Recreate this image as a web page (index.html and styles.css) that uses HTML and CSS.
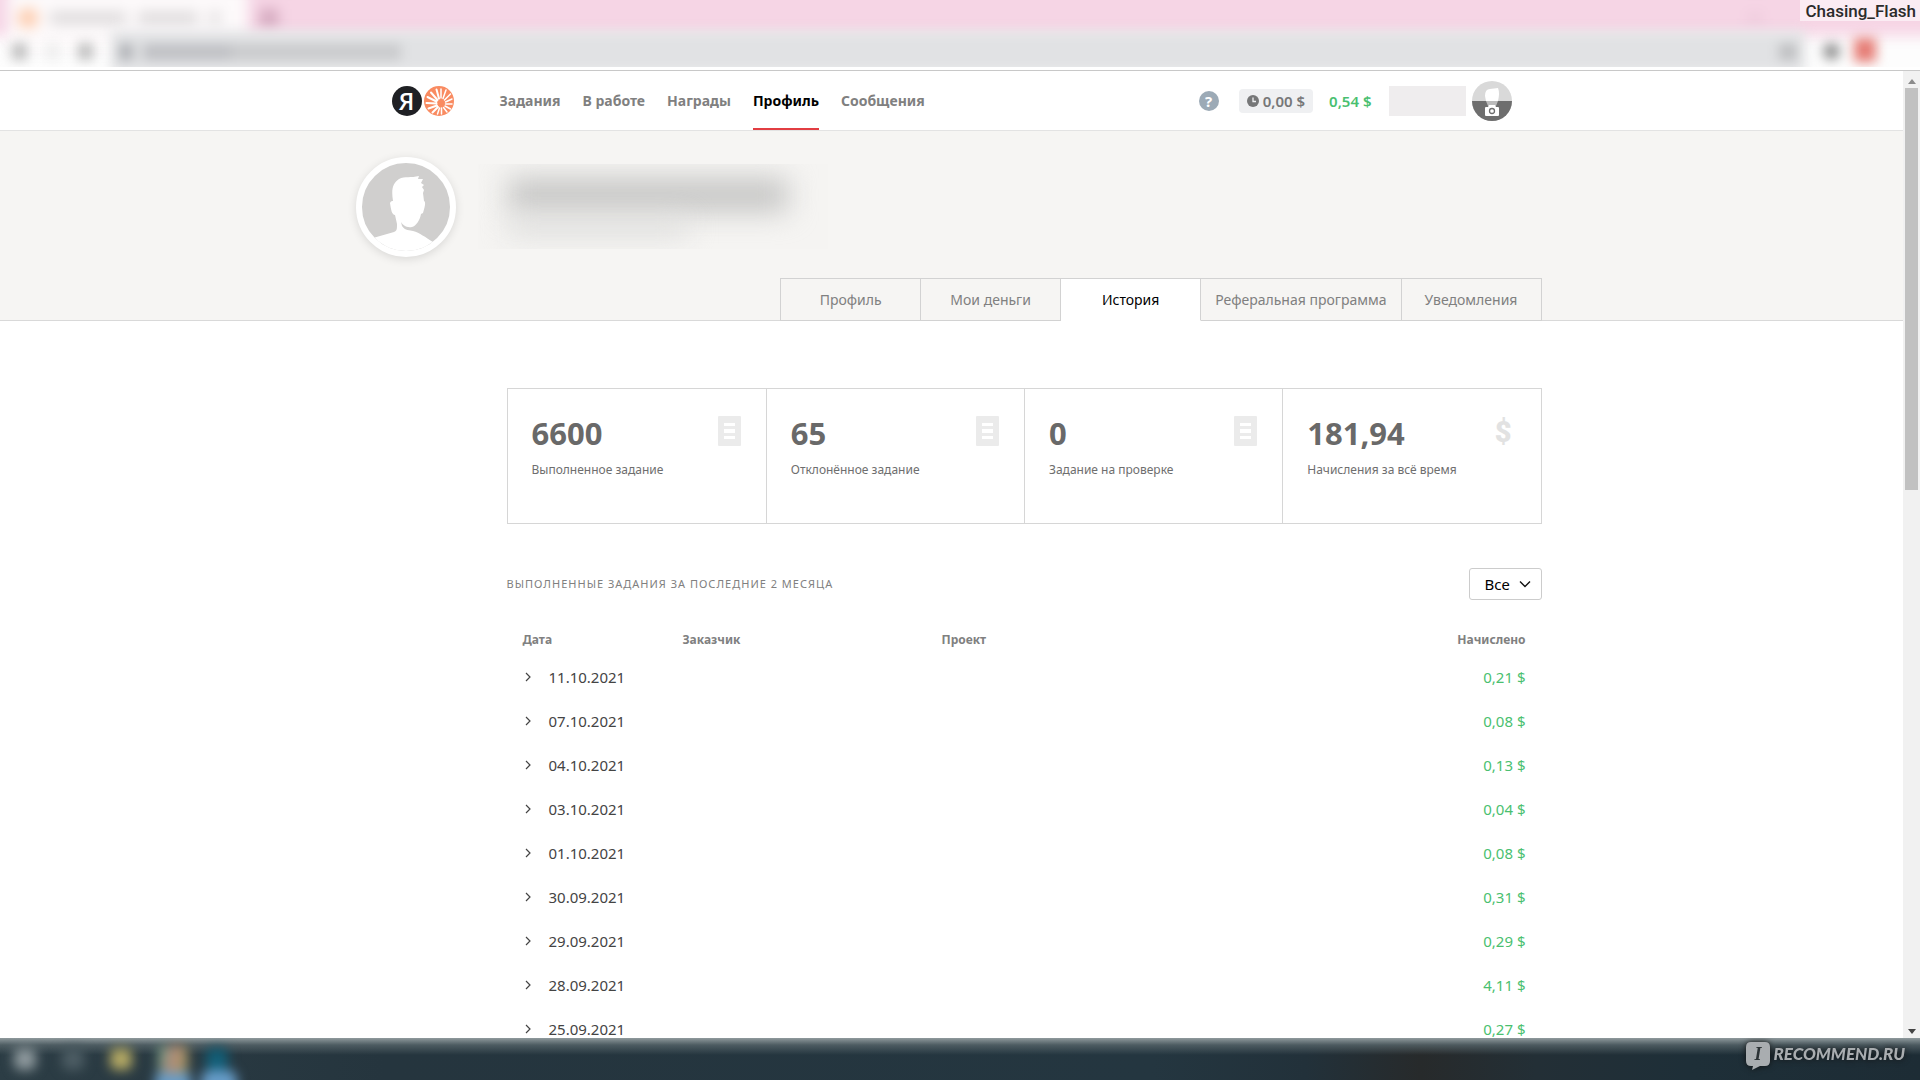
FILE: index.html
```html
<!DOCTYPE html>
<html lang="ru">
<head>
<meta charset="utf-8">
<meta name="viewport" content="width=device-width, initial-scale=1">
<title>История</title>
<link rel="stylesheet" href="styles.css">
</head>
<body>
<svg class="sprite" aria-hidden="true">
  <symbol id="person" viewBox="0 0 100 100">
    <path d="M0 100V86L17 81L38 75C41 74 41 72 41 67L39 58C36 58 35 53 34 46C35 44 36 44 37 44C35 32 37 26 43 22C49 19 55 21 63 19L62 22L67 22L65 26L68 28L66 30L68 33L67 36L68 44C70 45 69 49 67 56L65 57C64 63 60 69 56 70C50 71 47 68 45 65L46 69C49 74 54 73 57 74C64 76 69 80 77 85L100 100Z"/>
  </symbol>
  <symbol id="sheet" viewBox="0 0 23 30">
    <path fill-rule="evenodd" d="M0 1Q0 0 1 0H22Q23 0 23 1V29Q23 30 22 30H1Q0 30 0 29ZM6 7V10H17V7ZM6 13V17H17V13ZM6 20V23H17V20Z"/>
  </symbol>
  <symbol id="chevron" viewBox="0 0 10 10">
    <path d="M3 1L7 5L3 9" fill="none" stroke="currentColor" stroke-width="1.2"/>
  </symbol>
</svg>

<div class="browser">
  <div class="browser-soft">
    <div class="tabstrip">
      <div class="browser-tab"><i class="favicon"></i><i class="tab-title"></i><i class="tab-title tab-title-end"></i><i class="tab-close"></i></div>
      <i class="new-tab"></i>
      <i class="win-button"></i>
    </div>
    <div class="toolbar">
      <i class="tool"></i><i class="tool tool-faint"></i><i class="tool"></i>
      <div class="address"><i class="lock"></i><i class="url"></i><i class="url-rest"></i><i class="star"></i></div>
      <i class="tool tool-ext"></i><i class="tool tool-red"></i>
    </div>
  </div>
  <div class="author">Chasing_Flash</div>
</div>

<div class="viewport">
  <div class="page">
    <header class="header">
      <div class="header-inner">
        <a class="logo" href="#" aria-label="Яндекс Толока">
          <span class="logo-ya">Я</span>
          <svg class="logo-sun" viewBox="0 0 30 30">
            <circle cx="15" cy="15" r="15" fill="#f98b61"/>
            <g stroke="#fff" stroke-width="1.5" stroke-linecap="round">
              <path d="M17 12V3M19 12.500L22 4M20.500 14L26.500 8M21.500 16L28 13M21.500 18L28 18M21 20L26.500 23M19.500 21.500L23 26M17.500 22V28M15.500 22L13.500 28"/>
              <path stroke-width="2" d="M15 12.500L12.500 3.500M13.500 14L7 6.500M12.500 15.500L3.500 11M12.500 17.500L2.500 17M13 19.500L4.500 22.500M14 21L8.500 26.500"/>
            </g>
          </svg>
        </a>
        <nav class="nav">
          <a href="#">Задания</a>
          <a href="#">В работе</a>
          <a href="#">Награды</a>
          <a class="active" href="#">Профиль</a>
          <a href="#">Сообщения</a>
        </nav>
        <div class="account">
          <button class="help" type="button">?</button>
          <span class="pending">
            <svg viewBox="0 0 12 12"><circle cx="6" cy="6" r="6" fill="#767778"/><path d="M6 2.500V6.500H9" fill="none" stroke="#eff0f2" stroke-width="1.300"/></svg>
            0,00 $
          </span>
          <span class="balance">0,54 $</span>
          <span class="login"></span>
          <a class="user" href="#" aria-label="Аккаунт">
            <svg viewBox="0 0 40 40">
              <defs><clipPath id="round"><circle cx="20" cy="20" r="20"/></clipPath></defs>
              <g clip-path="url(#round)">
                <rect width="40" height="40" fill="#d9d9d9"/>
                <path fill="#fff" d="M14 20L13 15Q13 8 18 8L26 7Q28 12 26 20Z"/>
                <rect y="20" width="40" height="20" fill="#6e6e6e"/>
                <path fill="#bbb" d="M14 20H26L24 25H16Z"/>
                <path fill="#fff" d="M14 26H16L17 24H23L24 26H26Q27 26 27 27V34Q27 35 26 35H14Q13 35 13 34V27Q13 26 14 26Z"/>
                <circle cx="20" cy="30" r="2.500" fill="none" stroke="#6e6e6e" stroke-width="1.300"/>
              </g>
            </svg>
          </a>
        </div>
      </div>
    </header>

    <section class="hero">
      <div class="hero-inner">
        <div class="person">
          <div class="avatar"><svg viewBox="0 0 100 100"><use href="#person"/></svg></div>
          <div class="name"><i class="name-line"></i><i class="name-line name-sub"></i></div>
        </div>
        <nav class="tabs">
          <a href="#">Профиль</a>
          <a href="#">Мои деньги</a>
          <a class="active" href="#">История</a>
          <a href="#">Реферальная программа</a>
          <a href="#">Уведомления</a>
        </nav>
      </div>
    </section>

    <main class="content">
      <section class="stats">
        <div class="stat"><div><strong>6600</strong><span>Выполненное задание</span></div><svg class="stat-icon"><use href="#sheet"/></svg></div>
        <div class="stat"><div><strong>65</strong><span>Отклонённое задание</span></div><svg class="stat-icon"><use href="#sheet"/></svg></div>
        <div class="stat"><div><strong>0</strong><span>Задание на проверке</span></div><svg class="stat-icon"><use href="#sheet"/></svg></div>
        <div class="stat"><div><strong>181,94</strong><span>Начисления за всё время</span></div><b class="dollar">$</b></div>
      </section>

      <div class="list-head">
        <h2>Выполненные задания за последние 2 месяца</h2>
        <div class="filter">
          <select aria-label="Фильтр"><option>Все</option></select>
          <svg viewBox="0 0 12 12"><path d="M1 3.500L6 8.500L11 3.500" fill="none" stroke="#111" stroke-width="1.400"/></svg>
        </div>
      </div>

      <table class="history">
        <thead>
          <tr><th class="col-date">Дата</th><th class="col-customer">Заказчик</th><th>Проект</th><th class="col-sum">Начислено</th></tr>
        </thead>
        <tbody>
          <tr><td colspan="3"><button type="button"><svg><use href="#chevron"/></svg>11.10.2021</button></td><td class="col-sum">0,21 $</td></tr>
          <tr><td colspan="3"><button type="button"><svg><use href="#chevron"/></svg>07.10.2021</button></td><td class="col-sum">0,08 $</td></tr>
          <tr><td colspan="3"><button type="button"><svg><use href="#chevron"/></svg>04.10.2021</button></td><td class="col-sum">0,13 $</td></tr>
          <tr><td colspan="3"><button type="button"><svg><use href="#chevron"/></svg>03.10.2021</button></td><td class="col-sum">0,04 $</td></tr>
          <tr><td colspan="3"><button type="button"><svg><use href="#chevron"/></svg>01.10.2021</button></td><td class="col-sum">0,08 $</td></tr>
          <tr><td colspan="3"><button type="button"><svg><use href="#chevron"/></svg>30.09.2021</button></td><td class="col-sum">0,31 $</td></tr>
          <tr><td colspan="3"><button type="button"><svg><use href="#chevron"/></svg>29.09.2021</button></td><td class="col-sum">0,29 $</td></tr>
          <tr><td colspan="3"><button type="button"><svg><use href="#chevron"/></svg>28.09.2021</button></td><td class="col-sum">4,11 $</td></tr>
          <tr><td colspan="3"><button type="button"><svg><use href="#chevron"/></svg>25.09.2021</button></td><td class="col-sum">0,27 $</td></tr>
        </tbody>
      </table>
    </main>
  </div>
  <div class="scrollbar" aria-hidden="true">
    <i class="arrow arrow-up"></i>
    <i class="thumb"></i>
    <i class="arrow arrow-down"></i>
  </div>
</div>

<footer class="taskbar">
  <div class="apps">
    <i class="app app-start"></i><i class="app app-search"></i><i class="app app-folder"></i><i class="app app-chrome"></i><i class="app app-teal"></i>
  </div>
  <div class="watermark">
    <svg viewBox="0 0 24 28"><path fill="#a9adb0" d="M5 0H19Q24 0 24 5V19Q24 24 19 24H14L6 28L7 24H5Q0 24 0 19V5Q0 0 5 0Z"/><text x="12" y="18" text-anchor="middle" class="bubble-letter">I</text></svg>
    <span>RECOMMEND.RU</span>
  </div>
</footer>
</body>
</html>
```

FILE: styles.css
```css
* { box-sizing: border-box; }

body {
  margin: 0;
  height: 100vh;
  display: flex;
  flex-direction: column;
  overflow: hidden;
  background: #fff;
  color: #444;
  font: 15px/20px "Noto Sans", "Open Sans", sans-serif;
}

a { color: inherit; text-decoration: none; }
button, select { font: inherit; color: inherit; }
i { display: block; flex: none; }
.sprite { position: absolute; width: 0; height: 0; }

/* Browser frame */
.browser {
  position: relative;
  flex: none;
  height: 71px;
  border-bottom: 1px solid #c8c8c8;
}
.browser-soft {
  height: 67px;
  overflow: hidden;
  background: #fdfdfd;
}
.tabstrip {
  display: flex;
  align-items: center;
  height: 36px;
  background: #f6d5e5;
  filter: blur(7px);
  margin: 0 -20px;
  padding: 0 28px;
  box-shadow: 0 -16px 0 #f6d5e5;
}
.browser-tab {
  display: flex;
  align-items: center;
  gap: 12px;
  width: 240px;
  height: 64px;
  padding: 0 10px;
  background: #fdfafb;
}
.favicon { width: 20px; height: 20px; border-radius: 50%; background: #fdc9a9; }
.tab-title { width: 76px; height: 12px; background: #dcd9da; }
.tab-title-end { width: 60px; }
.tab-close { width: 10px; height: 14px; background: #dfdcdd; }
.new-tab { width: 18px; height: 18px; margin-left: 12px; background: #d2a6bc; }
.win-button { width: 14px; height: 8px; margin: 0 150px 0 auto; background: #e9c6d8; }
.toolbar {
  display: flex;
  align-items: center;
  gap: 18px;
  height: 31px;
  padding: 0 44px 0 12px;
  filter: blur(6px);
}
.tool { width: 15px; height: 17px; background: #bdbdbd; }
.tool-faint { background: #eee; }
.tool-ext { width: 17px; border-radius: 50%; background: #8d8d8d; }
.tool-red { width: 22px; height: 24px; margin: -4px 0 0 -4px; background: #e57b74; }
.address {
  display: flex;
  align-items: center;
  flex: 1;
  gap: 10px;
  height: 42px;
  padding: 0 8px;
  background: #e1e2e4;
}
.lock { width: 14px; height: 16px; background: #afb1b5; }
.url { width: 90px; height: 16px; background: #bfc0c4; }
.url-rest { width: 170px; height: 16px; margin-left: -12px; background: #c9cacc; }
.star { width: 18px; height: 16px; margin-left: auto; background: #bdbec0; }
.author {
  position: absolute;
  top: 0;
  right: 0;
  padding: 1px 4px 0 5px;
  background: rgba(255, 255, 255, .55);
  color: #2b2b2b;
  font: 500 17px/20px Roboto, sans-serif;
}

/* Page and scrollbar */
.viewport { flex: 1; min-height: 0; display: flex; }
.page { flex: 1; min-width: 0; overflow: hidden; }
.scrollbar {
  flex: none;
  display: flex;
  flex-direction: column;
  align-items: center;
  width: 17px;
  background: #f1f1f1;
}
.arrow { border: 4px solid transparent; }
.arrow-up { margin: 4px 0; border-bottom: 5px solid #8b8b8b; }
.arrow-down { margin: auto 0 0; border-top: 5px solid #444; }
.thumb { width: 13px; height: 402px; background: #c1c1c1; }

.header { background: #fff; border-bottom: 1px solid #e3e3e3; }
.header-inner {
  display: flex;
  align-items: center;
  max-width: 1120px;
  height: 59px;
  margin: 0 auto;
}
.logo { display: flex; gap: 2px; }
.logo-ya {
  width: 30px;
  height: 30px;
  border-radius: 50%;
  background: #1f2024;
  color: #fff;
  font: 600 24px/29px "Open Sans", sans-serif;
  text-align: center;
}
.logo-sun { width: 30px; height: 30px; }
.nav {
  display: flex;
  align-self: stretch;
  gap: 22px;
  margin-left: 46px;
  color: #808080;
  font-weight: 700;
  font-size: 14px;
}
.nav a { display: flex; align-items: center; border: solid transparent; border-width: 2px 0; }
.nav .active { color: #000; border-bottom-color: #e23d42; }
.account { display: flex; align-items: center; margin-left: auto; font-weight: 600; }
.help {
  width: 20px;
  height: 20px;
  padding: 0;
  border: 0;
  border-radius: 50%;
  background: #9caab6;
  color: #fff;
  font-weight: 700;
}
.pending {
  display: flex;
  align-items: center;
  gap: 4px;
  height: 24px;
  margin: 0 16px 0 20px;
  padding: 0 8px;
  border-radius: 4px;
  background: #eff0f2;
  color: #767778;
}
.pending svg { width: 12px; height: 12px; }
.balance { color: #4abf70; }
.login { width: 77px; height: 30px; margin: 0 6px 0 17px; background: #efedee; }
.user, .user svg { display: block; width: 40px; height: 40px; }

/* Profile banner */
.hero { height: 190px; background: #f6f5f3; border-bottom: 1px solid #d9d9d9; }
.hero-inner {
  display: flex;
  flex-direction: column;
  justify-content: space-between;
  max-width: 1180px;
  height: 190px;
  margin: 0 auto;
}
.person { display: flex; gap: 22px; margin: 26px 0 0 -6px; }
.avatar {
  width: 100px;
  height: 100px;
  border: 6px solid #fff;
  border-radius: 50%;
  overflow: hidden;
  background: #d0cfce;
  box-shadow: 0 2px 10px rgba(0, 0, 0, .12);
}
.avatar svg { display: block; width: 100px; height: 100px; margin: -6px; fill: #fff; }
.name {
  width: 350px;
  height: 85px;
  margin-top: 7px;
  padding: 14px 30px;
  overflow: hidden;
  background: #f5f4f2;
}
.name-line { width: 280px; height: 34px; background: #c6c6c5; filter: blur(14px); }
.name-sub { width: 180px; height: 16px; margin-top: 8px; background: #dcdcdb; }
.tabs {
  display: flex;
  align-self: flex-end;
  border: solid #d2d2d2;
  border-width: 1px 0 0 1px;
  color: #808080;
  font-size: 14px;
}
.tabs a {
  min-width: 140px;
  padding: 11px 14px 10px;
  border: solid #d2d2d2;
  border-width: 0 1px 1px 0;
  text-align: center;
  white-space: nowrap;
}
.tabs .active { background: #fff; border-bottom-color: #fff; color: #000; }

/* Statistics */
.content { max-width: 1180px; margin: 0 auto; padding: 67px 0 0 145px; }
.stats { display: grid; grid-template-columns: repeat(4, 1fr); border: 1px solid #d6d6d6; }
.stat {
  display: flex;
  justify-content: space-between;
  height: 134px;
  padding: 27px 25px 0 24px;
  border-left: 1px solid #d6d6d6;
}
.stat:first-child { border-left: 0; }
.stat strong { display: block; color: #696969; font-size: 31px; line-height: 34px; }
.stat span { display: block; margin-top: 10px; color: #6e6e6e; font-size: 12px; white-space: nowrap; }
.stat-icon { width: 23px; height: 30px; fill: #ebebeb; }
.dollar { padding-right: 4px; color: #e2e2e2; font: 900 29px/32px Roboto, sans-serif; }

/* History */
.list-head { display: flex; align-items: center; justify-content: space-between; margin-top: 44px; }
.list-head h2 {
  margin: 0;
  color: #808080;
  font-size: 11px;
  font-weight: 400;
  letter-spacing: 1px;
  text-transform: uppercase;
}
.filter {
  display: flex;
  align-items: center;
  gap: 8px;
  height: 32px;
  padding: 0 10px 0 15px;
  border: 1px solid #ccc;
  border-radius: 3px;
  color: #000;
}
.filter select { appearance: none; padding: 0; border: 0; background: none; }
.filter svg { width: 12px; height: 12px; }

.history { width: 100%; margin-top: 23px; border-collapse: collapse; }
.history th { height: 32px; padding: 2px 16px 0; color: #808080; font-size: 12px; font-weight: 700; text-align: left; }
.history td { height: 44px; padding: 0 16px; }
.history .col-date { width: 160px; }
.history .col-customer { width: 259px; }
.history .col-sum { text-align: right; }
.history td.col-sum { color: #4abf70; }
.history button {
  display: flex;
  align-items: center;
  gap: 16px;
  padding: 0;
  border: 0;
  background: none;
}
.history svg { width: 10px; height: 10px; }

/* Taskbar */
.taskbar {
  flex: none;
  display: flex;
  justify-content: space-between;
  height: 42px;
  overflow: hidden;
  background:
    linear-gradient(#8f9a9d 0, rgba(87, 101, 106, .8) 7px, rgba(38, 54, 62, 0) 17px),
    linear-gradient(90deg, #2c3d45 0, #25353e 20%, #243640 60%, #22313a 68%, #272a2b 74%, #232f36 80%, #1e2f38 88%, #1d2c35);
}
.apps { display: flex; align-items: center; gap: 26px; padding: 2px 14px; filter: blur(6px); }
.app { width: 22px; height: 22px; border-radius: 6px; }
.app-start { background: #8e999d; }
.app-search { background: #4d5d64; }
.app-folder { background: #b4a964; }
.app-chrome {
  width: 30px;
  height: 28px;
  background: linear-gradient(100deg, #5fa28a, #b78878 50%, #a49767 80%);
  box-shadow: 0 28px 0 3px #679cc8, 46px 28px 0 3px #679cc8;
}
.app-teal { margin-left: -8px; background: #125f78; }
.watermark {
  display: flex;
  gap: 4px;
  padding: 4px 15px 0 0;
  color: #a9adb0;
  font: italic 900 17px/23px Lato, sans-serif;
  filter: drop-shadow(0 0 3px #111);
}
.watermark svg { width: 24px; height: 28px; }
.bubble-letter { fill: #2c3336; font: italic 700 18px "Liberation Serif", serif; }
```
